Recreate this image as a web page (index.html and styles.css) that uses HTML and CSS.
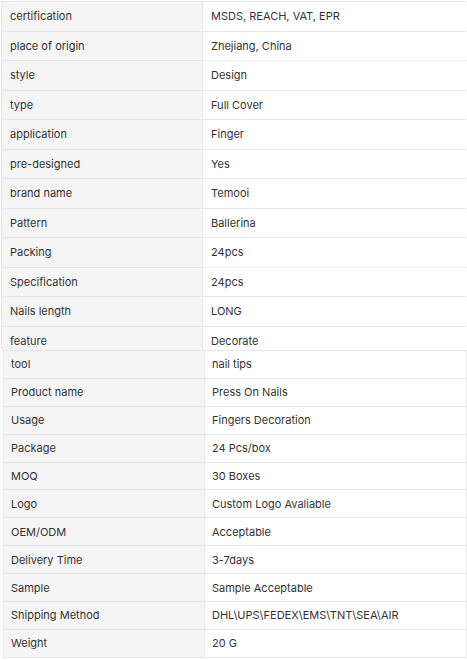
FILE: index.html
```html
<!DOCTYPE html>
<html>
<head>
<meta charset="utf-8">
<link rel="stylesheet" href="styles.css">
</head>
<body>
<div class="clip">
<table class="spec spec-a">
<colgroup><col class="ck"><col class="cv"></colgroup>
<tr><td class="k">certification</td><td class="v">MSDS, REACH, VAT, EPR</td></tr>
<tr><td class="k">place of origin</td><td class="v">Zhejiang, China</td></tr>
<tr><td class="k">style</td><td class="v">Design</td></tr>
<tr><td class="k">type</td><td class="v">Full Cover</td></tr>
<tr><td class="k">application</td><td class="v">Finger</td></tr>
<tr><td class="k">pre-designed</td><td class="v">Yes</td></tr>
<tr><td class="k">brand name</td><td class="v">Temooi</td></tr>
<tr><td class="k">Pattern</td><td class="v">Ballerina</td></tr>
<tr><td class="k">Packing</td><td class="v">24pcs</td></tr>
<tr><td class="k">Specification</td><td class="v">24pcs</td></tr>
<tr><td class="k">Nails length</td><td class="v">LONG</td></tr>
<tr><td class="k">feature</td><td class="v">Decorate</td></tr>
</table>
</div>
<table class="spec spec-b">
<colgroup><col class="ck"><col class="cv2"></colgroup>
<tr><td class="k">tool</td><td class="v">nail tips</td></tr>
<tr><td class="k">Product name</td><td class="v">Press On Nails</td></tr>
<tr><td class="k">Usage</td><td class="v">Fingers Decoration</td></tr>
<tr><td class="k">Package</td><td class="v">24 Pcs/box</td></tr>
<tr><td class="k">MOQ</td><td class="v">30 Boxes</td></tr>
<tr><td class="k">Logo</td><td class="v">Custom Logo Avaliable</td></tr>
<tr><td class="k">OEM/ODM</td><td class="v">Acceptable</td></tr>
<tr><td class="k">Delivery Time</td><td class="v">3-7days</td></tr>
<tr><td class="k">Sample</td><td class="v">Sample Acceptable</td></tr>
<tr><td class="k">Shipping Method</td><td class="v">DHL\UPS\FEDEX\EMS\TNT\SEA\AIR</td></tr>
<tr><td class="k">Weight</td><td class="v">20 G</td></tr>
</table>
</body>
</html>
```
FILE: styles.css
```css
html, body {
  margin: 0;
  padding: 0;
  background: #fff;
}
body {
  font-family: Inter, "Noto Sans", sans-serif;
  font-size: 11px;
  color: #333;
  padding: 1px 1px 0 1px;
}
.clip {
  height: 349px;
  overflow: hidden;
  width: 465px;
}
.spec {
  border-collapse: collapse;
  table-layout: fixed;
}
.spec td {
  border: 1px solid #e6e6e6;
  vertical-align: middle;
  padding: 0 8px;
  line-height: 14px;
  box-sizing: border-box;
}
.ck { width: 201px; }
.cv { width: 264px; }
.cv2 { width: 262px; }
.spec-a {
  width: 465px;
}
.spec-a td {
  height: 29.5px;
}
.spec-b {
  width: 463px;
  margin-left: 2px;
}
.spec-b td {
  height: 27.9px;
  padding-left: 7px;
}
.k { background: #f5f5f5; }
.v { background: #fff; }
```
